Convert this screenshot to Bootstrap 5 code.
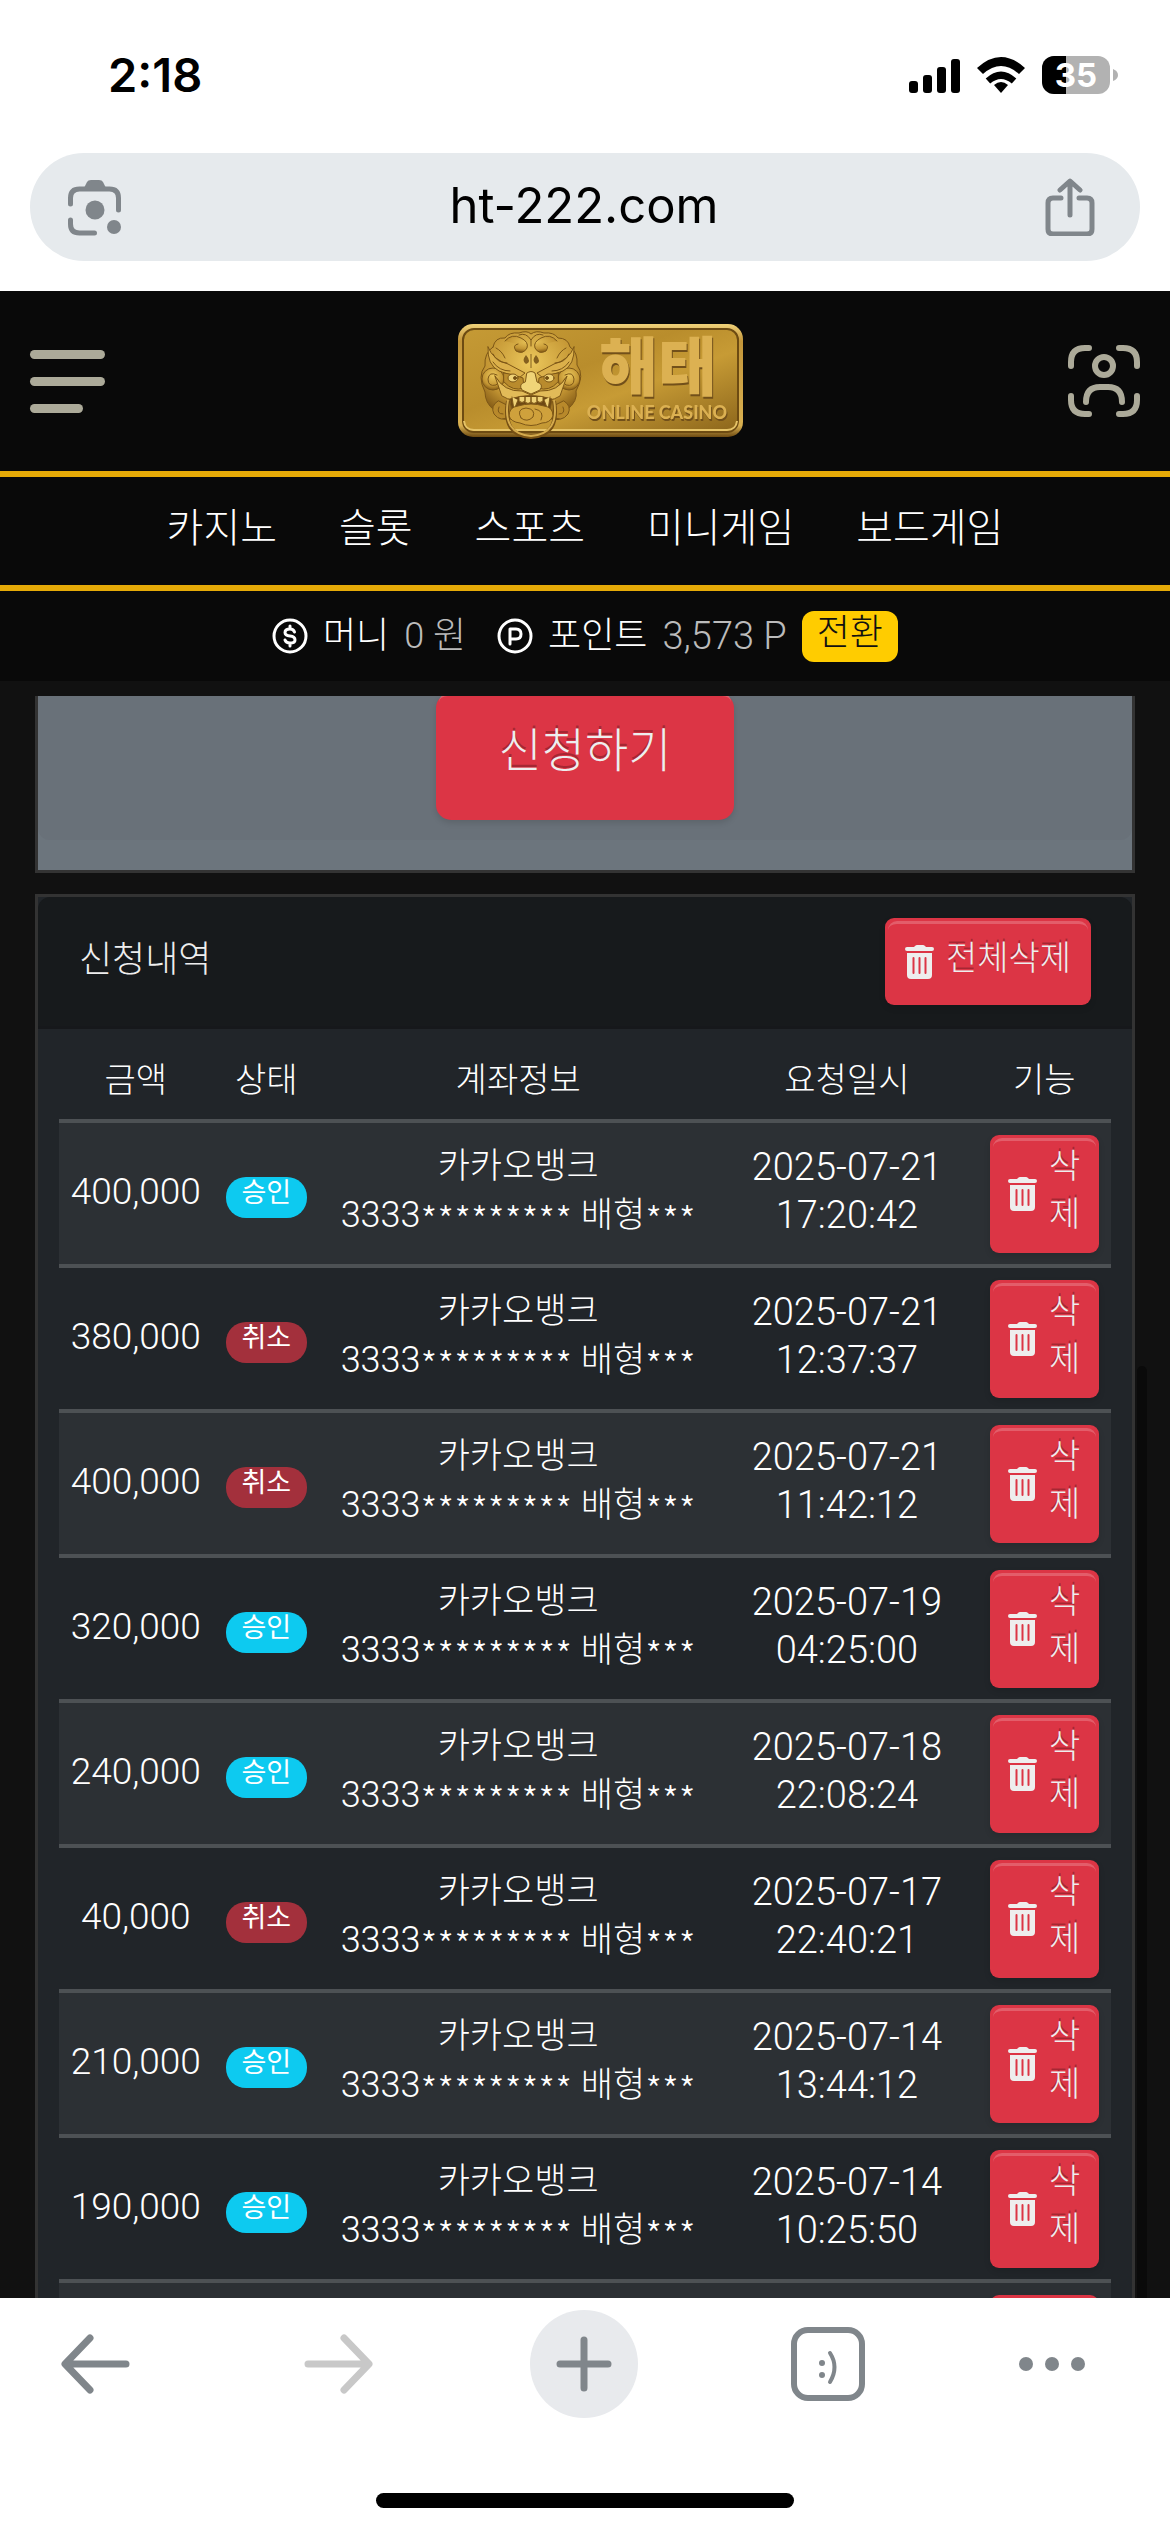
<!DOCTYPE html>
<html lang="ko">
<head>
<meta charset="utf-8">
<meta name="viewport" content="width=device-width, initial-scale=1">
<title>신청내역</title>
<link href="https://cdn.jsdelivr.net/npm/bootstrap@5.3.0/dist/css/bootstrap.min.css" rel="stylesheet">
<script src="https://cdn.jsdelivr.net/npm/bootstrap@5.3.0/dist/js/bootstrap.bundle.min.js"></script>
<style>
  body { font-family: Roboto, "Noto Sans CJK KR", sans-serif; font-weight: 300; font-size: 34px; line-height: 48px; }
  svg { display: block; flex: none; }
  .ui-btn { border: 0; background: none; padding: 0; display: flex; }
  .app { overflow: hidden; background: #111; }

  /* phone and browser chrome */
  .phone-bar { height: 150px; padding: 0 52px 0 108px; color: #000; font-family: Inter, sans-serif; font-weight: 600; font-size: 47px; }
  .url-wrap { padding: 3px 30px 30px; }
  .url-pill { height: 108px; border-radius: 54px; background: #e6eaed; padding: 0 44px 0 36px; }
  .url-pill input { border: 0; background: none; min-width: 0; color: #000; font-family: Inter, sans-serif; font-weight: 400; font-size: 49px; outline: 0; padding: 0 0 4px; }
  .toolbar { height: 234px; }
  .toolbar-row { height: 132px; padding: 0 84px 0 41px; }
  .tool-btn { width: 108px; height: 108px; }
  .plus-btn { border-radius: 50%; background: #e8eaed; }
  .home-bar { width: 418px; height: 15px; border-radius: 8px; background: #000; margin: 63px auto 0; }

  /* site header */
  .site-head { background: #090909; color: #fff; }
  .brand-row { height: 180px; padding: 0 30px; }
  .brand-link { margin-left: 28px; }
  .menu-bars { flex-direction: column; gap: 18px; width: 75px; }
  .menu-bars span { height: 9px; border-radius: 5px; background: #acaa99; width: 75px; }
  .menu-bars span:last-child { width: 53px; }
  .menu-row { height: 120px; border: solid #e5aa07; border-width: 6px 0; gap: 62px; font-size: 40px; padding-bottom: 4px; }
  .menu-row a { color: #fff; text-decoration: none; }
  .money-row { height: 90px; font-size: 36px; gap: 15px; }
  .money-row .sum { color: #bbb; font-size: 38px; }
  .money-row .won { font-size: 36px; }
  .swap-btn { border: 0; border-radius: 12px; background: #fc0; color: #111; font-size: 36px; line-height: 45px; padding: 0 15px 6px; font-weight: 300; }

  /* scrolled page */
  .page-view { flex: 1 1 0; min-height: 0; overflow: hidden; margin-top: 15px; padding: 0 35px; position: relative; }
  .page-scroll { margin-top: -30px; }
  .panel { border: 3px solid #333; }
  .apply-panel { background: #6c757d; padding-bottom: 30px; margin-bottom: 21px; }
  .apply-body { background: #697179; padding: 24px 0 20px; border-radius: 0 0 12px 12px; }
  .red-btn { border: 0; color: #eee; background: #dc3545; font-weight: 300; text-shadow: 0 -3px 0 rgba(0,0,0,.25); box-shadow: 0 3px 6px rgba(0,0,0,.12); position: relative; border-radius: 9px; }
  .red-btn::before { content: ""; position: absolute; inset: 3px 3px auto; height: 12px; border-top: 3px solid rgba(255,255,255,.2); border-radius: 9px 9px 0 0; }
  .apply-btn { width: 298px; height: 127px; font-size: 47px; border-radius: 15px; padding-bottom: 12px; }
  .apply-btn::before { top: 0; }
  .list-panel { background: #212529; }
  .list-head { height: 132px; padding: 0 41px; background: #171a1c; border-bottom: 3px solid #16181b; border-radius: 12px 12px 0 0; }
  .list-head h1 { font-size: 36px; font-weight: 300; color: #eee; line-height: 48px; padding-bottom: 4px; }
  .clear-btn { height: 87px; padding: 0 20px; gap: 11px; }
  .clear-btn .btn-word { padding-bottom: 8px; }
  .list-body { padding: 18px 21px 0; }
  .req-table { width: 100%; table-layout: fixed; text-align: center; color: #fff; }
  .req-table th { font-weight: 300; padding: 9px 0 15px; }
  .req-table td { padding: 12px 0 11px; }
  .req-table tbody tr { border-top: 4px solid #4d5154; }
  .req-table tbody tr:nth-child(odd) { background: #2c3034; }
  .c-sum { width: 14.6%; } .c-state { width: 10.2%; } .c-acct { width: 37.7%; } .c-date { width: 24.8%; }
  .req-table .num { font-size: 37px; padding-bottom: 15px; }
  .req-table .when { font-size: 38px; }
  .acct { font-size: 36px; }
  .acct .ko { font-size: 35px; }
  .acct .stars { font-family: "Noto Sans CJK KR", sans-serif; font-size: 38px; line-height: 24px; vertical-align: -8px; }
  .two-line { padding-bottom: 6px; }
  .two-line > div { height: 48px; white-space: nowrap; }
  .state { display: inline-block; height: 41px; width: 81px; border-radius: 20px; background: #0dcaf0; color: #fff; font-size: 27px; line-height: 32px; font-weight: 400; vertical-align: middle; }
  .state.no { background: #a3303c; }
  .del-btn { width: 109px; height: 118px; padding: 0 18px 8px; margin: 0 auto; }
  .del-btn svg { margin-top: 8px; }
  .del-btn .btn-word { width: 32px; }
  .scroll-thumb { position: absolute; right: 23px; top: 670px; bottom: 0; width: 10px; background: #0a0a0a; border-radius: 5px 5px 0 0; }
  .plate-text { filter: drop-shadow(1px 2px 0 #72501a); }
</style>
</head>
<body>
<svg width="0" height="0" class="position-absolute" aria-hidden="true">
  <symbol id="trash" viewBox="0 0 30 34">
    <path fill="#eee" d="M10 1q1-1 2-1h6q1 0 2 1l1 1h6q2 0 2 2t-2 2H2Q0 6 0 4t2-2h7zM2 8h25v22q0 4-4 4H6q-4 0-4-4z"/>
    <path stroke="#dc3545" stroke-width="2" stroke-linecap="round" d="M8.500 13v15M14.500 13v15M20.500 13v15"/>
  </symbol>
</svg>
<div class="app d-flex flex-column vh-100">
  <div class="bg-white flex-shrink-0">
    <div class="phone-bar d-flex justify-content-between align-items-center">
      <span>2:18</span>
      <div class="d-flex align-items-center">
        <svg width="212" height="40" viewBox="0 0 212 40">
          <g fill="#000"><rect x="9" y="26" width="9" height="12" rx="3"/><rect x="23" y="20" width="9" height="18" rx="3"/><rect x="37" y="12" width="9" height="26" rx="3"/><rect x="51" y="4" width="9" height="34" rx="3"/></g>
          <g fill="#000"><path d="M101 38l-7-8q7-6 14 0z"/><path d="M84 20q17-14 34 0l-5 5q-12-9-24 0z" transform="translate(10.100 3.500) scale(.9 1)"/><path d="M77 13Q101-9 125 13l-6 6Q101 3 83 19z"/></g>
          <clipPath id="batt"><rect x="142" y="1" width="68" height="38" rx="12"/></clipPath>
          <g clip-path="url(#batt)"><path fill="#b2b2b2" d="M142 1h68v38h-68z"/><path fill="#000" d="M142 1h24v38h-24z"/></g>
          <text x="176" y="32" text-anchor="middle" font-family="Inter, sans-serif" font-weight="700" font-size="33" fill="#fff">35</text>
        </svg>
        <svg width="6" height="12" viewBox="0 0 6 12"><path fill="#b2b2b2" d="M1 0q5 2 5 6t-5 6z"/></svg>
      </div>
    </div>
    <div class="url-wrap">
      <div class="url-pill d-flex align-items-center">
        <button class="ui-btn" aria-label="카메라 검색">
          <svg width="58" height="58" viewBox="0 0 58 58" fill="none" stroke="#80868b" stroke-width="5" stroke-linecap="round"><path d="M4.500 26v-6q0-9 9-9h30q9 0 9 9v12M4.500 42v4q0 9 9 9h15"/><path fill="#80868b" stroke="none" d="M18 10l3-6q1-2 4-2h8q3 0 4 2l3 6z"/><circle cx="29" cy="32" r="9.500" fill="#80868b" stroke="none"/><circle cx="48" cy="49" r="7" fill="#80868b" stroke="none"/></svg>
        </button>
        <input class="flex-grow-1 text-center" type="text" value="ht-222.com" aria-label="주소">
        <button class="ui-btn" aria-label="공유">
          <svg width="52" height="58" viewBox="0 0 52 58" fill="none" stroke="#80868b" stroke-width="5" stroke-linecap="round" stroke-linejoin="round"><path d="M17 20H9q-5 0-5 5v26q0 5 5 5h34q5 0 5-5V25q0-5-5-5h-8M26 37V4M16 12L26 3l10 9"/></svg>
        </button>
      </div>
    </div>
  </div>

  <header class="site-head flex-shrink-0">
    <div class="brand-row d-flex justify-content-between align-items-center">
      <button class="ui-btn menu-bars" aria-label="메뉴"><span></span><span></span><span></span></button>
      <a class="brand-link" href="#" aria-label="해태 온라인 카지노">
        <svg width="287" height="116" viewBox="0 0 287 116">
          <defs>
            <linearGradient id="plate" x1="0" y1="0" x2="1" y2="1"><stop offset="0" stop-color="#c59a35"/><stop offset=".4" stop-color="#b98d2c"/><stop offset=".6" stop-color="#c79b35"/><stop offset="1" stop-color="#8b651b"/></linearGradient>
            <linearGradient id="rim" x1="0" y1="0" x2="0" y2="1"><stop offset="0" stop-color="#f0d27a"/><stop offset=".15" stop-color="#c3963a"/><stop offset=".9" stop-color="#d9b050"/><stop offset="1" stop-color="#6d4a12"/></linearGradient>
            <radialGradient id="mane" cx=".5" cy=".35" r=".65"><stop offset="0" stop-color="#ecc85c"/><stop offset=".7" stop-color="#c39533"/><stop offset="1" stop-color="#855c16"/></radialGradient>
          </defs>
          <rect x="1" y="1" width="285" height="113" rx="15" fill="url(#rim)"/>
          <rect x="6" y="6" width="275" height="103" rx="11" fill="url(#plate)" stroke="#6d4b12" stroke-width="2"/>
          <path d="M7 98q1 9 10 9h253q9 0 10-9" fill="none" stroke="#e6c468" stroke-width="2"/>
          <g fill="url(#mane)" stroke="#7d5717" stroke-width="1" stroke-linecap="round" stroke-linejoin="round">
            <path d="M36 24q2-10 12-9 4-6 14-5 8-3 12 1 5-4 13-1 10-1 14 5 10 0 12 9 8 5 7 18 8 10-1 26 2 10-9 19-3 12-14 9H52q-12 2-15-9-9-7-9-18-8-16 0-26-1-13 8-19z"/>
            <circle cx="36" cy="56" r="11"/><circle cx="112" cy="56" r="11"/>
            <path d="M40 52q-8-4-9 4 0 8 8 6 5-4 0-7M108 52q8-4 9 4 0 8-8 6-5-4 0-7" fill="none"/>
            <path d="M41 78q-8 5-4 13 7 9 15 2l-1-10zM107 78q8 5 4 13-7 9-15 2l1-10z" fill="#b8892b"/>
            <path d="M42 84q-3 7 4 7M106 84q3 7-4 7" fill="none"/>
            <path d="M48 18q7-8 16-3 8 4 6 10-4 7-11 3-4-6 2-7M100 18q-7-8-16-3-8 4-6 10 4 7 11 3 4-6-2-7"/>
            <path d="M62 12q7-3 12 5 5-8 12-5M74 17v6" fill="none"/>
            <path d="M31 24q5 13 20 17l17 9-6 5-20-7q-12-6-11-24zM117 24q-5 13-20 17l-17 9 6 5 20-7q12-6 11-24z" fill="#dbb04a"/>
            <path d="M36 31q4 9 14 9M112 31q-4 9-14 9M36 39q6 9 17 9M112 39q-6 9-17 9M39 25q6 3 9 10M109 25q-6 3-9 10" fill="none"/>
            <path d="M47 50q10 1 19 5l1 10q-11 4-20-6zM101 50q-10 1-19 5l-1 10q11 4 20-6z" fill="#b98b2d"/>
            <ellipse cx="56" cy="55" rx="5" ry="4" fill="#efd277"/><ellipse cx="92" cy="55" rx="5" ry="4" fill="#efd277"/>
            <circle cx="58" cy="55" r="1.500" fill="#704c12"/><circle cx="90" cy="55" r="1.500" fill="#704c12"/>
            <path d="M70 50q4-3 8 0l2 9q7 2 3 8l-9 4-9-4q-4-6 3-8z" fill="#f0d477"/>
            <path d="M38 53q9 16 27 15l9 4 9-4q18 1 27-15l-7 20q-10 7-29 3-19 4-29-3z" fill="#e2bb58"/>
            <path d="M53 76q20-7 42 0l-3 18q-18 14-36 0z" fill="#6e4914"/>
            <path d="M55 74l2 13 4-10M93 74l-2 13-4-10M62 74v4q3 3 6 0v-4M68 74v5q3 3 6 0v-5M74 74v5q3 3 6 0v-5M80 74v4q3 3 6 0v-4" fill="#efd277"/>
            <path d="M52 93q0-9 9-10 13-4 26 0 9 1 9 10-3 7-11 7-11 5-22 0-9-1-11-7z" fill="#cfa13c"/>
            <path d="M64 95q-5-9 5-10 10 1 7 9-6 6-12 1M78 86q10 2 6 11" fill="none"/>
          </g>
          <path d="M69 32q-5 6 0 9 6-2 0-9zM79 32q-5 6 0 9 6-2 0-9z" fill="#84601f"/><path d="M74 31v14" stroke="#84601f"/>
          <path d="M51 78q-6 35 23 36 29-1 23-36" fill="none" stroke="#765014" stroke-width="4"/><path d="M51 77q-6 34 23 36 29-2 23-36" fill="none" stroke="#d4aa4c" stroke-width="2"/>
          <g class="plate-text" fill="#dcb152" text-anchor="middle"><text x="201" y="67" font-family="Noto Sans CJK KR, sans-serif" font-weight="900" font-size="64">해태</text><text x="200" y="96" font-family="Lato, sans-serif" font-weight="900" font-size="18">ONLINE CASINO</text></g>
        </svg>
      </a>
      <button class="ui-btn" aria-label="내 정보">
        <svg width="72" height="72" viewBox="0 0 72 72" fill="none" stroke="#acaa99" stroke-width="6" stroke-linecap="round"><path d="M3 21v-4Q3 3 17 3h4M51 3h4q14 0 14 14v4M69 51v4q0 14-14 14h-4M21 69h-4Q3 69 3 55v-4M18 57q0-15 14-15h8q14 0 14 15"/><circle cx="36" cy="21" r="9"/></svg>
      </button>
    </div>
    <nav class="menu-row d-flex justify-content-center align-items-center">
      <a href="#">카지노</a><a href="#">슬롯</a><a href="#">스포츠</a><a href="#">미니게임</a><a href="#">보드게임</a>
    </nav>
    <div class="money-row d-flex justify-content-center align-items-center">
      <svg width="36" height="36" viewBox="0 0 36 36" fill="none" stroke="#fff" stroke-width="3" stroke-linecap="round"><circle cx="18" cy="18" r="16"/><path d="M22.500 14q-1-3-4.500-3-5 0-5 3.500 0 3 5 3.500t5 4q0 3-5 3-4 0-5-3M18 8v3M18 25v3"/></svg>
      <span>머니</span><span class="sum won">0 원</span>
      <svg class="ms-3" width="36" height="36" viewBox="0 0 36 36" fill="none" stroke="#fff" stroke-width="3" stroke-linecap="round" stroke-linejoin="round"><circle cx="18" cy="18" r="16"/><path d="M13 26V11h6q5 0 5 5t-5 5h-6"/></svg>
      <span>포인트</span><span class="sum">3,573 P</span>
      <button class="swap-btn">전환</button>
    </div>
  </header>

  <main class="page-view">
    <div class="page-scroll">
      <section class="panel apply-panel">
        <div class="apply-body d-flex justify-content-center"><button class="red-btn apply-btn">신청하기</button></div>
      </section>
      <section class="panel list-panel">
        <div class="list-head d-flex justify-content-between align-items-center">
          <h1 class="m-0">신청내역</h1>
          <button class="red-btn clear-btn d-flex align-items-center"><svg width="30" height="34"><use href="#trash"/></svg><span class="btn-word">전체삭제</span></button>
        </div>
        <div class="list-body">
          <table class="req-table">
            <colgroup><col class="c-sum"><col class="c-state"><col class="c-acct"><col class="c-date"><col></colgroup>
            <thead><tr><th>금액</th><th>상태</th><th>계좌정보</th><th>요청일시</th><th>기능</th></tr></thead>
            <tbody>
              <tr><td class="num">400,000</td><td><span class="state">승인</span></td><td class="acct"><div class="two-line"><div class="ko">카카오뱅크</div><div>3333<span class="stars">*********</span> <span class="ko">배형</span><span class="stars">***</span></div></div></td><td class="when"><div class="two-line"><div>2025-07-21</div><div>17:20:42</div></div></td><td><button class="red-btn del-btn d-flex justify-content-between align-items-center"><svg width="30" height="34"><use href="#trash"/></svg><span class="btn-word">삭<br>제</span></button></td></tr>
              <tr><td class="num">380,000</td><td><span class="state no">취소</span></td><td class="acct"><div class="two-line"><div class="ko">카카오뱅크</div><div>3333<span class="stars">*********</span> <span class="ko">배형</span><span class="stars">***</span></div></div></td><td class="when"><div class="two-line"><div>2025-07-21</div><div>12:37:37</div></div></td><td><button class="red-btn del-btn d-flex justify-content-between align-items-center"><svg width="30" height="34"><use href="#trash"/></svg><span class="btn-word">삭<br>제</span></button></td></tr>
              <tr><td class="num">400,000</td><td><span class="state no">취소</span></td><td class="acct"><div class="two-line"><div class="ko">카카오뱅크</div><div>3333<span class="stars">*********</span> <span class="ko">배형</span><span class="stars">***</span></div></div></td><td class="when"><div class="two-line"><div>2025-07-21</div><div>11:42:12</div></div></td><td><button class="red-btn del-btn d-flex justify-content-between align-items-center"><svg width="30" height="34"><use href="#trash"/></svg><span class="btn-word">삭<br>제</span></button></td></tr>
              <tr><td class="num">320,000</td><td><span class="state">승인</span></td><td class="acct"><div class="two-line"><div class="ko">카카오뱅크</div><div>3333<span class="stars">*********</span> <span class="ko">배형</span><span class="stars">***</span></div></div></td><td class="when"><div class="two-line"><div>2025-07-19</div><div>04:25:00</div></div></td><td><button class="red-btn del-btn d-flex justify-content-between align-items-center"><svg width="30" height="34"><use href="#trash"/></svg><span class="btn-word">삭<br>제</span></button></td></tr>
              <tr><td class="num">240,000</td><td><span class="state">승인</span></td><td class="acct"><div class="two-line"><div class="ko">카카오뱅크</div><div>3333<span class="stars">*********</span> <span class="ko">배형</span><span class="stars">***</span></div></div></td><td class="when"><div class="two-line"><div>2025-07-18</div><div>22:08:24</div></div></td><td><button class="red-btn del-btn d-flex justify-content-between align-items-center"><svg width="30" height="34"><use href="#trash"/></svg><span class="btn-word">삭<br>제</span></button></td></tr>
              <tr><td class="num">40,000</td><td><span class="state no">취소</span></td><td class="acct"><div class="two-line"><div class="ko">카카오뱅크</div><div>3333<span class="stars">*********</span> <span class="ko">배형</span><span class="stars">***</span></div></div></td><td class="when"><div class="two-line"><div>2025-07-17</div><div>22:40:21</div></div></td><td><button class="red-btn del-btn d-flex justify-content-between align-items-center"><svg width="30" height="34"><use href="#trash"/></svg><span class="btn-word">삭<br>제</span></button></td></tr>
              <tr><td class="num">210,000</td><td><span class="state">승인</span></td><td class="acct"><div class="two-line"><div class="ko">카카오뱅크</div><div>3333<span class="stars">*********</span> <span class="ko">배형</span><span class="stars">***</span></div></div></td><td class="when"><div class="two-line"><div>2025-07-14</div><div>13:44:12</div></div></td><td><button class="red-btn del-btn d-flex justify-content-between align-items-center"><svg width="30" height="34"><use href="#trash"/></svg><span class="btn-word">삭<br>제</span></button></td></tr>
              <tr><td class="num">190,000</td><td><span class="state">승인</span></td><td class="acct"><div class="two-line"><div class="ko">카카오뱅크</div><div>3333<span class="stars">*********</span> <span class="ko">배형</span><span class="stars">***</span></div></div></td><td class="when"><div class="two-line"><div>2025-07-14</div><div>10:25:50</div></div></td><td><button class="red-btn del-btn d-flex justify-content-between align-items-center"><svg width="30" height="34"><use href="#trash"/></svg><span class="btn-word">삭<br>제</span></button></td></tr>
              <tr><td></td><td></td><td></td><td></td><td><button class="red-btn del-btn d-block" aria-label="삭제"></button></td></tr>
            </tbody>
          </table>
        </div>
      </section>
    </div>
    <div class="scroll-thumb"></div>
  </main>

  <footer class="toolbar bg-white flex-shrink-0">
    <div class="toolbar-row d-flex justify-content-between align-items-center">
      <button class="ui-btn tool-btn justify-content-center align-items-center" aria-label="뒤로"><svg width="70" height="62" viewBox="0 0 70 62" fill="none" stroke="#80868b" stroke-width="7" stroke-linecap="round" stroke-linejoin="round"><path d="M66 31H6M30 5L5 31l25 26"/></svg></button>
      <button class="ui-btn tool-btn justify-content-center align-items-center" aria-label="앞으로"><svg width="70" height="62" viewBox="0 0 70 62" fill="none" stroke="#c8c8c8" stroke-width="7" stroke-linecap="round" stroke-linejoin="round"><path d="M4 31h60M40 5l25 26-25 26"/></svg></button>
      <button class="ui-btn tool-btn plus-btn justify-content-center align-items-center" aria-label="새 탭"><svg width="56" height="56" viewBox="0 0 56 56" stroke="#80868b" stroke-width="7" stroke-linecap="round"><path d="M28 4v48M4 28h48"/></svg></button>
      <button class="ui-btn tool-btn justify-content-center align-items-center" aria-label="탭 목록"><svg width="74" height="74" viewBox="0 0 74 74" fill="none" stroke="#80868b"><rect x="3" y="3" width="68" height="68" rx="14" stroke-width="6"/><path d="M39 26q9 14 0 29" stroke-width="4" stroke-linecap="round"/><circle cx="31" cy="36" r="3" fill="#80868b" stroke="none"/><circle cx="31" cy="48" r="3" fill="#80868b" stroke="none"/></svg></button>
      <button class="ui-btn" aria-label="더보기"><svg width="68" height="16" viewBox="0 0 68 16" fill="#80868b"><circle cx="8" cy="8" r="7"/><circle cx="34" cy="8" r="7"/><circle cx="60" cy="8" r="7"/></svg></button>
    </div>
    <div class="home-bar"></div>
  </footer>
</div>
</body>
</html>
